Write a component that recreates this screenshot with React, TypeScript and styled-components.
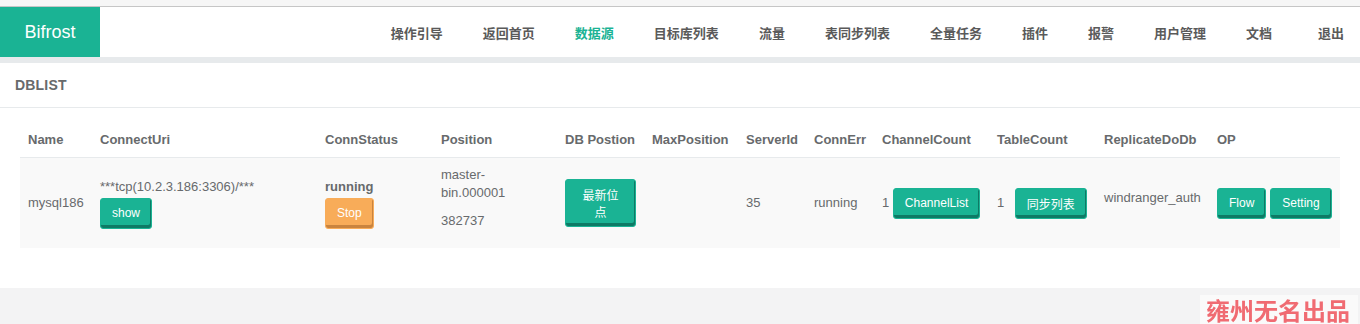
import React from "react";
import styled, { createGlobalStyle } from "styled-components";

const GREEN = "#1ab394";
const TEXT = "#676a6c";

const Global = createGlobalStyle`
  html, body { margin: 0; padding: 0; }
  body {
    background: #f3f3f4;
    font-family: "Liberation Sans", Arial, "Noto Sans CJK SC", sans-serif;
    font-size: 13px;
    color: ${TEXT};
  }
`;

const Page = styled.div`
  width: 1360px;
`;

const TopStrip = styled.div`
  height: 6px;
  background: #f6f6f6;
  border-bottom: 1px solid #c6c6c6;
`;

const Header = styled.header`
  display: flex;
  height: 50px;
  background: #fff;
`;

const Logo = styled.div`
  width: 100px;
  background: ${GREEN};
  color: #fff;
  font-size: 18px;
  display: flex;
  align-items: center;
  justify-content: center;
`;

const Nav = styled.nav`
  flex: 1;
  display: flex;
  justify-content: flex-end;
  align-items: center;
`;

const NavItem = styled.a<{ $active?: boolean }>`
  padding: 0 20px;
  font-family: "Noto Sans CJK SC", "Liberation Sans", sans-serif;
  font-size: 13px;
  font-weight: 600;
  color: ${(p) => (p.$active ? GREEN : "#5a5a5a")};
  text-decoration: none;
  &:last-child {
    padding-right: 16px;
    margin-left: 6px;
  }
`;

const Band = styled.div`
  height: 6px;
  background: #e7eaec;
`;

const Panel = styled.section`
  background: #fff;
`;

const PanelTitle = styled.div`
  height: 44px;
  display: flex;
  align-items: center;
  padding: 0 15px;
  border-bottom: 1px solid #e7eaec;
  font-size: 14px;
  font-weight: 700;
  color: ${TEXT};
  letter-spacing: 0.2px;
`;

const PanelBody = styled.div`
  padding: 15px 20px 20px;
`;

const Table = styled.table`
  width: 1320px;
  table-layout: fixed;
  border-collapse: collapse;
  margin-bottom: 20px;
`;

const Th = styled.th`
  text-align: left;
  padding: 8px;
  font-size: 13px;
  font-weight: 700;
  line-height: 18px;
  color: ${TEXT};
  border-bottom: 1px solid #e7eaec;
  white-space: nowrap;
`;

const Tr = styled.tr`
  background: #f9f9f9;
`;

const Td = styled.td<{ $nowrap?: boolean }>`
  padding: 8px;
  vertical-align: middle;
  font-size: 13px;
  line-height: 18px;
  color: ${TEXT};
  white-space: ${(p) => (p.$nowrap ? "nowrap" : "normal")};
`;

const P = styled.p<{ $narrow?: boolean }>`
  margin: 0 0 10px;
  ${(p) => (p.$narrow ? "max-width: 100px;" : "")}
`;

const Line = styled.div<{ $bold?: boolean }>`
  font-weight: ${(p) => (p.$bold ? 700 : 400)};
  margin-bottom: 2px;
`;

const Btn = styled.button<{ $warn?: boolean; $cjk?: boolean; $gap?: boolean }>`
  display: inline-block;
  border: 1px solid ${(p) => (p.$warn ? "#f8ac59" : GREEN)};
  background: ${(p) => (p.$warn ? "#f8ac59" : GREEN)};
  color: #fff;
  font-family: ${(p) =>
    p.$cjk
      ? `"Noto Sans CJK SC", "Liberation Sans", sans-serif`
      : `"Liberation Sans", Arial, sans-serif`};
  font-size: 12px;
  line-height: 17px;
  padding: 6px 11px;
  border-radius: 3px;
  white-space: normal;
  box-shadow: inset -1px -3px 0 ${(p) => (p.$warn ? "#c9843f" : "#0e7a65")};
  cursor: pointer;
  vertical-align: middle;
  margin-left: ${(p) => (p.$gap ? "7px" : "0")};
  & + & { margin-left: 4px; }
`;

const Watermark = styled.div`
  position: fixed;
  right: 2px;
  bottom: 0;
  padding: 0 8px 0 6px;
  background: #fafafa;
  color: #f06b72;
  font-family: "Noto Sans CJK SC", sans-serif;
  font-size: 24px;
  font-weight: 700;
  line-height: 29px;
`;

const navItems = [
  "操作引导",
  "返回首页",
  "数据源",
  "目标库列表",
  "流量",
  "表同步列表",
  "全量任务",
  "插件",
  "报警",
  "用户管理",
  "文档",
  "退出",
];

const cols: [string, number][] = [
  ["Name", 72],
  ["ConnectUri", 225],
  ["ConnStatus", 116],
  ["Position", 124],
  ["DB Postion", 87],
  ["MaxPosition", 94],
  ["ServerId", 68],
  ["ConnErr", 68],
  ["ChannelCount", 115],
  ["TableCount", 107],
  ["ReplicateDoDb", 113],
  ["OP", 131],
];

export default function App() {
  return (
    <Page>
      <Global />
      <TopStrip />
      <Header>
        <Logo>Bifrost</Logo>
        <Nav>
          {navItems.map((n) => (
            <NavItem key={n} $active={n === "数据源"}>
              {n}
            </NavItem>
          ))}
        </Nav>
      </Header>
      <Band />
      <Panel>
        <PanelTitle>DBLIST</PanelTitle>
        <PanelBody>
          <Table>
            <colgroup>
              {cols.map(([n, w]) => (
                <col key={n} style={{ width: w }} />
              ))}
            </colgroup>
            <thead>
              <tr>
                {cols.map(([n]) => (
                  <Th key={n}>{n}</Th>
                ))}
              </tr>
            </thead>
            <tbody>
              <Tr>
                <Td>mysql186</Td>
                <Td>
                  <Line>***tcp(10.2.3.186:3306)/***</Line>
                  <Btn>show</Btn>
                </Td>
                <Td>
                  <Line $bold>running</Line>
                  <Btn $warn>Stop</Btn>
                </Td>
                <Td>
                  <P $narrow>master-bin.000001</P>
                  <P>382737</P>
                </Td>
                <Td>
                  <Btn $cjk>最新位点</Btn>
                </Td>
                <Td></Td>
                <Td>35</Td>
                <Td>running</Td>
                <Td $nowrap>
                  1 <Btn>ChannelList</Btn>
                </Td>
                <Td $nowrap>
                  1 <Btn $cjk $gap>同步列表</Btn>
                </Td>
                <Td>
                  <P>windranger_auth</P>
                </Td>
                <Td $nowrap>
                  <Btn>Flow</Btn>
                  <Btn>Setting</Btn>
                </Td>
              </Tr>
            </tbody>
          </Table>
        </PanelBody>
      </Panel>
      <Watermark>雍州无名出品</Watermark>
    </Page>
  );
}
